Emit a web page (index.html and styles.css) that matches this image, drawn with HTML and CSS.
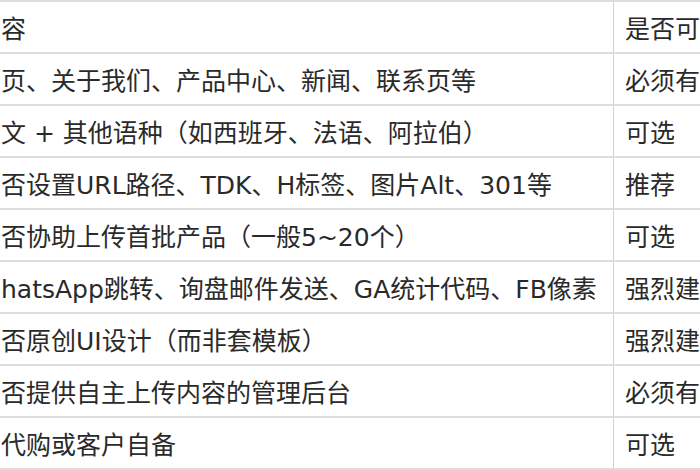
FILE: index.html
```html
<!DOCTYPE html>
<html lang="zh-CN">
<head>
<meta charset="utf-8">
<link rel="stylesheet" href="styles.css">
</head>
<body>
<div class="table">
  <div class="row head"><div class="c1">容</div><div class="c2">是否可</div></div>
  <div class="row"><div class="c1">页、关于我们、产品中心、新闻、联系页等</div><div class="c2">必须有</div></div>
  <div class="row"><div class="c1">文 + 其他语种（如西班牙、法语、阿拉伯）</div><div class="c2">可选</div></div>
  <div class="row"><div class="c1">否设置URL路径、TDK、H标签、图片Alt、301等</div><div class="c2">推荐</div></div>
  <div class="row"><div class="c1">否协助上传首批产品（一般5~20个）</div><div class="c2">可选</div></div>
  <div class="row"><div class="c1">hatsApp跳转、询盘邮件发送、GA统计代码、FB像素</div><div class="c2">强烈建</div></div>
  <div class="row"><div class="c1">否原创UI设计（而非套模板）</div><div class="c2">强烈建</div></div>
  <div class="row"><div class="c1">否提供自主上传内容的管理后台</div><div class="c2">必须有</div></div>
  <div class="row"><div class="c1">代购或客户自备</div><div class="c2">可选</div></div>
</div>
</body>
</html>
```
FILE: styles.css
```css
html, body {
  margin: 0;
  padding: 0;
  background: #fff;
}
body {
  width: 700px;
  height: 470px;
  overflow: hidden;
  font-family: "DejaVu Sans", "Noto Sans CJK SC", sans-serif;
  font-size: 25px;
  color: #2a2a2a;
}
.table {
  border-top: 2px solid #dcdcdc;
}
.row {
  display: flex;
  height: 50px;
  border-bottom: 2px solid #dcdcdc;
}
.c1, .c2 {
  display: flex;
  align-items: center;
  white-space: nowrap;
  overflow: hidden;
}
.c1 {
  width: 614px;
  flex: none;
  padding-left: 1px;
  box-sizing: border-box;
  border-right: 1px solid #d0d0d0;
}
.c2 {
  flex: 1;
  padding-left: 11px;
}
```
